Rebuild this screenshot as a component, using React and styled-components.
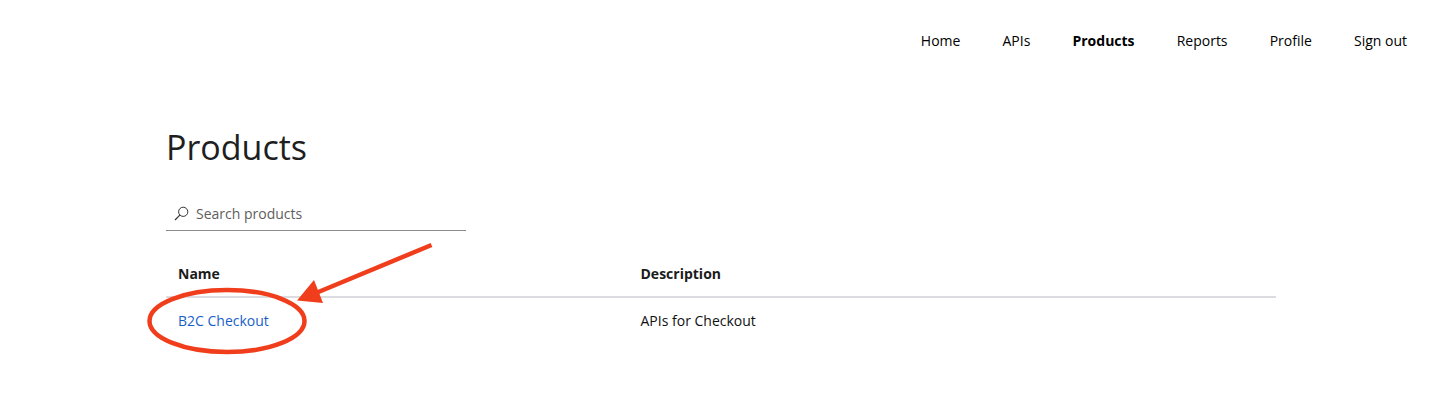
import React from "react";
import styled, { createGlobalStyle } from "styled-components";

const GlobalStyle = createGlobalStyle`
  html, body {
    margin: 0;
    padding: 0;
    background: #fff;
    font-family: "Open Sans", sans-serif;
    font-size: 14px;
    color: #1b1b1b;
  }
`;

const Page = styled.div`
  position: relative;
  width: 1442px;
  height: 413px;
  overflow: hidden;
`;

const Nav = styled.nav`
  display: flex;
  justify-content: flex-end;
  gap: 42.1px;
  height: 82px;
  align-items: center;
  padding-right: 35px;
  box-sizing: border-box;
`;

const NavLink = styled.a`
  color: #000;
  font-size: 14px;
  line-height: 20px;
  font-weight: ${props => (props.$active ? 700 : 400)};
`;

const Main = styled.main`
  width: 1110px;
  margin-left: 166px;
`;

const Title = styled.h1`
  margin: 40px 0 0;
  font-size: 34px;
  line-height: 50px;
  font-weight: 400;
  color: #1f1f1f;
`;

const Search = styled.div`
  display: flex;
  align-items: center;
  gap: 7px;
  width: 300px;
  height: 34px;
  margin-top: 25px;
  padding-left: 8px;
  box-sizing: border-box;
  border-bottom: 1px solid #8a8a8a;
  font-size: 14px;
  color: #605e5c;
`;

const Row = styled.div`
  display: grid;
  grid-template-columns: 462.5px 1fr;
  padding: 0 12px;
`;

const HeadRow = styled(Row)`
  height: 67px;
  padding-bottom: 13px;
  align-items: end;
  border-bottom: 2px solid #dcdce0;
  box-sizing: border-box;
  font-weight: 700;
  font-size: 14px;
  line-height: 19px;
  color: #1b1b1b;
`;

const BodyRow = styled(Row)`
  height: 44px;
  align-items: center;
  font-size: 14px;
  color: #111;
`;

const ProductLink = styled.a`
  color: #1a5fc9;
`;

const Annotation = styled.svg`
  position: absolute;
  top: 0;
  left: 0;
  pointer-events: none;
`;

function App() {
  return (
    <Page>
      <GlobalStyle />
      <Nav>
        <NavLink>Home</NavLink>
        <NavLink>APIs</NavLink>
        <NavLink $active>Products</NavLink>
        <NavLink>Reports</NavLink>
        <NavLink>Profile</NavLink>
        <NavLink>Sign out</NavLink>
      </Nav>
      <Main>
        <Title>Products</Title>
        <Search>
          <svg width="15" height="15" viewBox="0 0 15 15" fill="none" stroke="#333" strokeWidth="1">
            <circle cx="9.2" cy="5.8" r="4.6" />
            <path d="M5.8 9.2 L1 14" strokeWidth="1.2" />
          </svg>
          <span>Search products</span>
        </Search>
        <HeadRow>
          <span>Name</span>
          <span>Description</span>
        </HeadRow>
        <BodyRow>
          <ProductLink>B2C Checkout</ProductLink>
          <span>APIs for Checkout</span>
        </BodyRow>
      </Main>
      <Annotation width="1442" height="413" viewBox="0 0 1442 413">
        <ellipse cx="227" cy="321" rx="77.5" ry="31" fill="none" stroke="#f03e1d" strokeWidth="4.5" />
        <path d="M431.5 245 L316 293" stroke="#f03e1d" strokeWidth="4.5" fill="none" />
        <path d="M297 300.5 L314 280 L323 303 Z" fill="#f03e1d" />
      </Annotation>
    </Page>
  );
}

export default App;
